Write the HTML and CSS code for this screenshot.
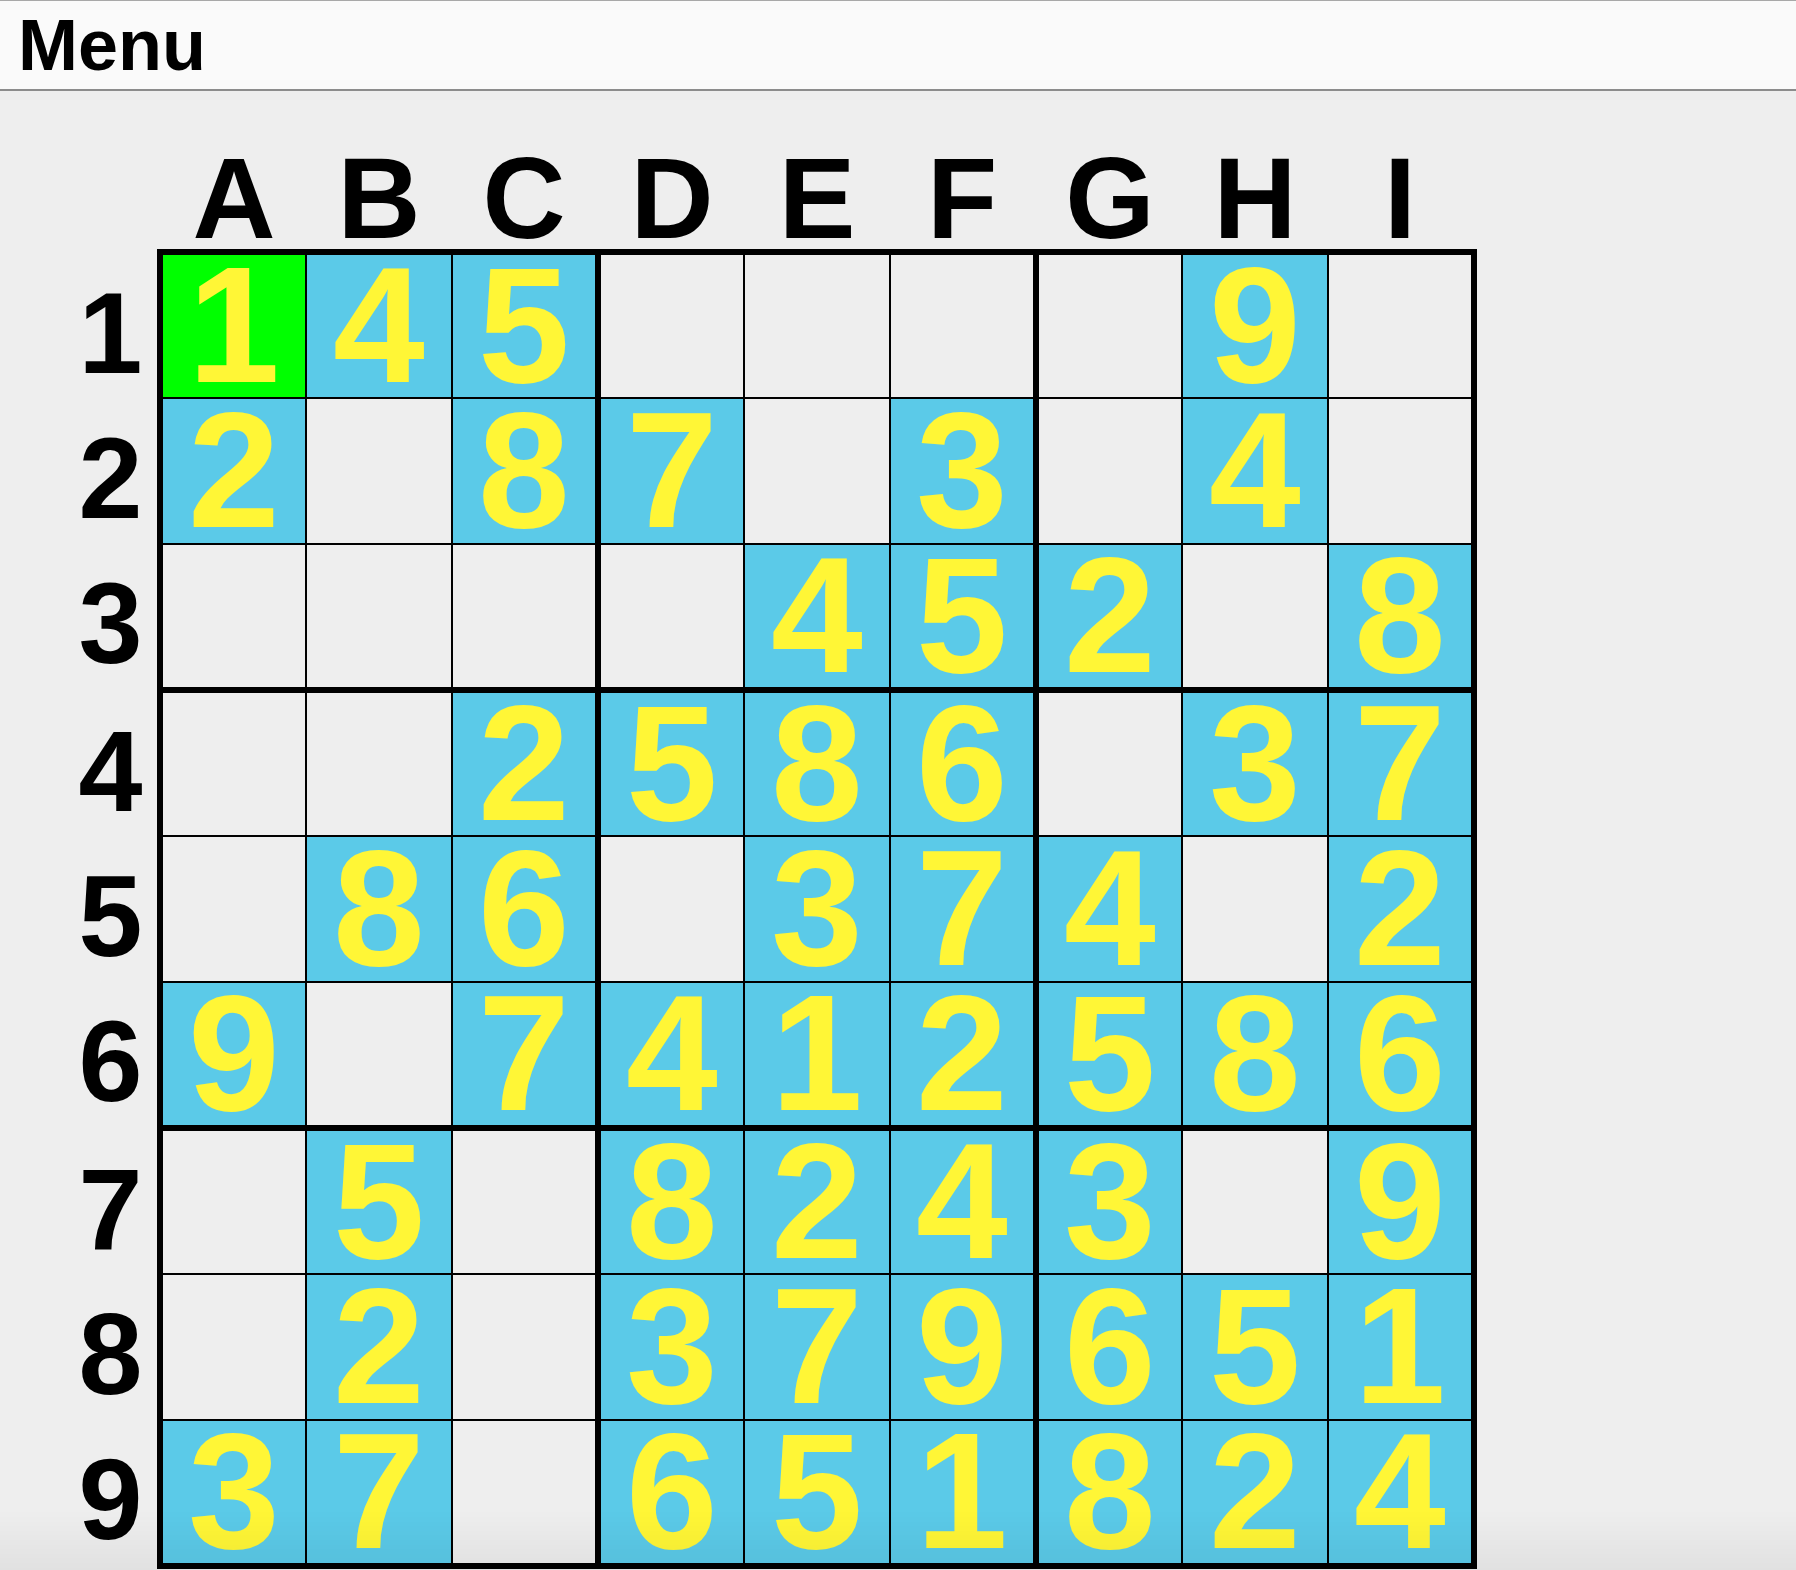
FILE: index.html
```html
<!DOCTYPE html>
<html>
<head>
<meta charset="utf-8">
<title>Sudoku</title>
<link rel="stylesheet" href="styles.css">
</head>
<body>
<div class="menubar"><span class="menu">Menu</span></div>
<main class="main">
  <div class="layout">
    <div class="corner"></div>
    <div class="colhdr">
      <div class="hgroup"><span>A</span><span>B</span><span>C</span></div>
      <div class="hgroup"><span>D</span><span>E</span><span>F</span></div>
      <div class="hgroup"><span>G</span><span>H</span><span>I</span></div>
    </div>
    <div class="rowhdr">
      <div class="vgroup"><span>1</span><span>2</span><span>3</span></div>
      <div class="vgroup"><span>4</span><span>5</span><span>6</span></div>
      <div class="vgroup"><span>7</span><span>8</span><span>9</span></div>
    </div>
    <div class="board">
      <div class="box">
        <div class="cell sel">1</div><div class="cell on">4</div><div class="cell on">5</div>
        <div class="cell on">2</div><div class="cell"></div><div class="cell on">8</div>
        <div class="cell"></div><div class="cell"></div><div class="cell"></div>
      </div>
      <div class="box">
        <div class="cell"></div><div class="cell"></div><div class="cell"></div>
        <div class="cell on">7</div><div class="cell"></div><div class="cell on">3</div>
        <div class="cell"></div><div class="cell on">4</div><div class="cell on">5</div>
      </div>
      <div class="box">
        <div class="cell"></div><div class="cell on">9</div><div class="cell"></div>
        <div class="cell"></div><div class="cell on">4</div><div class="cell"></div>
        <div class="cell on">2</div><div class="cell"></div><div class="cell on">8</div>
      </div>
      <div class="box">
        <div class="cell"></div><div class="cell"></div><div class="cell on">2</div>
        <div class="cell"></div><div class="cell on">8</div><div class="cell on">6</div>
        <div class="cell on">9</div><div class="cell"></div><div class="cell on">7</div>
      </div>
      <div class="box">
        <div class="cell on">5</div><div class="cell on">8</div><div class="cell on">6</div>
        <div class="cell"></div><div class="cell on">3</div><div class="cell on">7</div>
        <div class="cell on">4</div><div class="cell on">1</div><div class="cell on">2</div>
      </div>
      <div class="box">
        <div class="cell"></div><div class="cell on">3</div><div class="cell on">7</div>
        <div class="cell on">4</div><div class="cell"></div><div class="cell on">2</div>
        <div class="cell on">5</div><div class="cell on">8</div><div class="cell on">6</div>
      </div>
      <div class="box">
        <div class="cell"></div><div class="cell on">5</div><div class="cell"></div>
        <div class="cell"></div><div class="cell on">2</div><div class="cell"></div>
        <div class="cell on">3</div><div class="cell on">7</div><div class="cell"></div>
      </div>
      <div class="box">
        <div class="cell on">8</div><div class="cell on">2</div><div class="cell on">4</div>
        <div class="cell on">3</div><div class="cell on">7</div><div class="cell on">9</div>
        <div class="cell on">6</div><div class="cell on">5</div><div class="cell on">1</div>
      </div>
      <div class="box">
        <div class="cell on">3</div><div class="cell"></div><div class="cell on">9</div>
        <div class="cell on">6</div><div class="cell on">5</div><div class="cell on">1</div>
        <div class="cell on">8</div><div class="cell on">2</div><div class="cell on">4</div>
      </div>
    </div>
  </div>
</main>
<div class="shade"></div>
</body>
</html>
```

FILE: styles.css
```css
html, body {
  margin: 0;
  padding: 0;
}
body {
  background: #eeeeee;
  font-family: "Liberation Sans", Arial, sans-serif;
  font-weight: bold;
  color: #000;
  width: 1796px;
  height: 1570px;
  overflow: hidden;
}
.menubar {
  height: 88px;
  background: #fafafa;
  border-top: 1px solid #a8a8a8;
  border-bottom: 2px solid #8c8c8c;
  padding-left: 18px;
}
.menu {
  font-size: 72px;
  line-height: 88px;
  display: block;
}
.main {
  padding: 56px 0 0 62px;
}
.layout {
  display: grid;
  grid-template-columns: 95px 1320px;
  grid-template-rows: 102px 1320px;
}
.colhdr {
  display: grid;
  grid-template-columns: repeat(3, 432px);
  grid-template-rows: 102px;
  column-gap: 6px;
  padding: 0 6px;
}
.hgroup {
  display: grid;
  grid-template-columns: 142px 144px 142px;
  grid-template-rows: 102px;
  column-gap: 2px;
}
.hgroup span {
  display: flex;
  align-items: center;
  justify-content: center;
  font-size: 115px;
  line-height: 90px;
}
.rowhdr {
  display: grid;
  grid-template-rows: repeat(3, 432px);
  row-gap: 6px;
  padding: 6px 0;
}
.vgroup {
  display: grid;
  grid-template-rows: 142px 144px 142px;
  row-gap: 2px;
}
.vgroup span {
  display: flex;
  align-items: center;
  justify-content: center;
  font-size: 115px;
  line-height: 90px;
  padding-top: 13px;
  padding-left: 2px;
}
.board {
  display: grid;
  grid-template-columns: repeat(3, 432px);
  grid-template-rows: repeat(3, 432px);
  gap: 6px;
  padding: 6px;
  background: #000;
}
.box {
  display: grid;
  grid-template-columns: 142px 144px 142px;
  grid-template-rows: 142px 144px 142px;
  gap: 2px;
}
.cell {
  background: #eeeeee;
  display: flex;
  align-items: center;
  justify-content: center;
  font-size: 165px;
  line-height: 120px;
  color: #fff636;
  padding-bottom: 2px;
}
.cell.on {
  background: #5bcae8;
}
.cell.sel {
  background: #00ff00;
}
.shade {
  position: fixed;
  left: 0;
  right: 0;
  bottom: 0;
  height: 60px;
  background: linear-gradient(to bottom, rgba(0,0,0,0), rgba(0,0,0,0.05));
  pointer-events: none;
}
```
